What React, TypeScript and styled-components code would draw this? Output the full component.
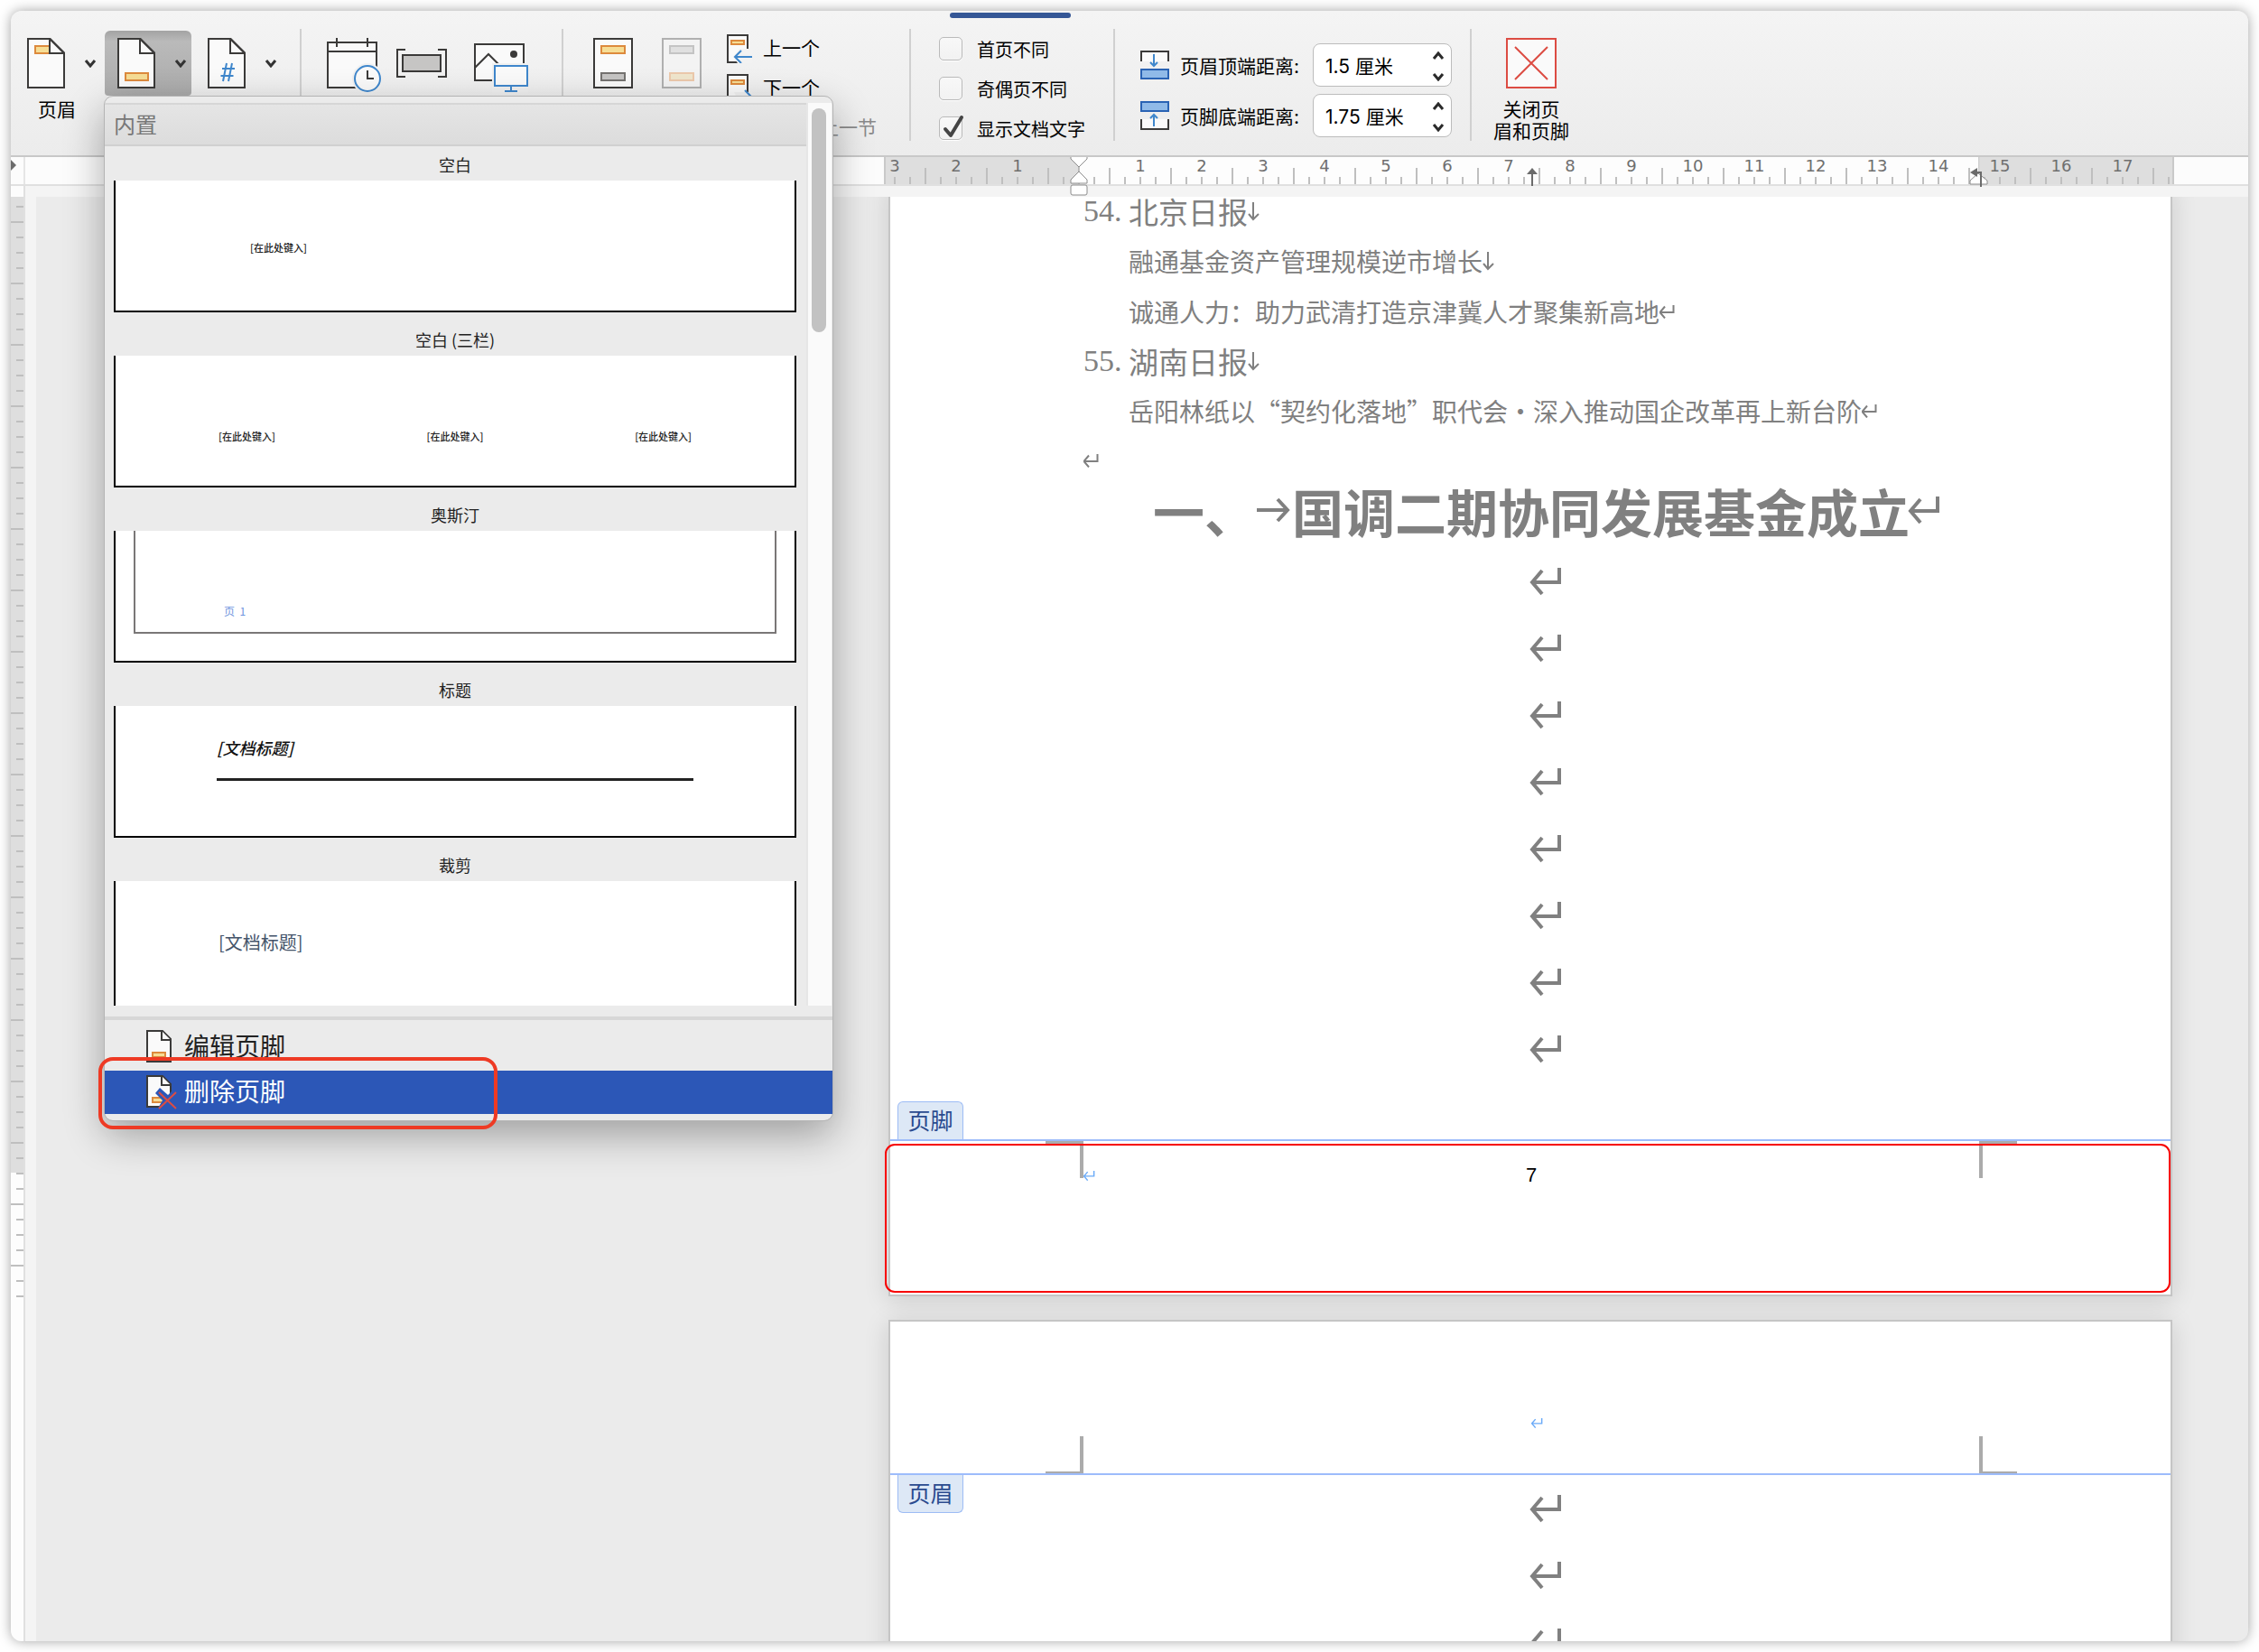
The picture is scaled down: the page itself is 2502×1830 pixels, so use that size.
import React from "react";
import styled, { createGlobalStyle, css } from "styled-components";

const UI_FONT = `Inter, "Noto Sans CJK SC", "Noto Sans", sans-serif`;
const CJK_FONT = `"Noto Sans CJK SC", "Noto Sans", sans-serif`;
const INK = "#3b3a39";
const BLUE = "#3f87cc";
const PAGE_INK = "#808080";

const GlobalStyle = createGlobalStyle`
  *, *::before, *::after { box-sizing: border-box; }
  html, body { margin: 0; height: 100%; }
  body { background: #fff; overflow: hidden; }
  #root { height: 100%; }
  button, input { font: inherit; color: inherit; }
  button { background: none; border: 0; padding: 0; cursor: pointer; }
  ul, ol, p, h1, h2 { margin: 0; padding: 0; list-style: none; }
  svg { display: block; flex: none; }
`;

/* ---------- window ---------- */

const Desktop = styled.div`
  height: 100%;
  padding: 12px;
  font-family: ${UI_FONT};
  color: #000;
`;

const Window = styled.main`
  position: relative;
  display: flex;
  flex-direction: column;
  height: 100%;
  border-radius: 12px;
  background: #ebebeb;
  box-shadow: 0 0 14px rgba(0, 0, 0, 0.36);
`;

/* ---------- ribbon ---------- */

const Ribbon = styled.header`
  position: relative;
  display: flex;
  align-items: flex-start;
  padding: 20px 0 8px;
  border-bottom: 2px solid #c8c8c8;
  border-radius: 12px 12px 0 0;
  background: linear-gradient(#f4f4f4, #ececec);
`;

const ActiveTab = styled.span`
  position: absolute;
  top: 2px;
  left: 1040px;
  width: 134px;
  height: 6px;
  border-radius: 3px;
  background: #355796;
`;

const Group = styled.div<{ $pad: string }>`
  display: flex;
  align-items: flex-start;
  padding: ${(p) => p.$pad};
  height: 132px;
`;

const Separator = styled.span`
  flex: none;
  width: 2px;
  height: 124px;
  background: #d0d0d0;
`;

const SplitColumn = styled.div`
  width: 100px;
  padding-top: 2px;
`;

const SplitButton = styled.button<{ $active?: boolean }>`
  display: flex;
  align-items: center;
  justify-content: space-between;
  width: 96px;
  height: 72px;
  padding: 0 5px 0 14px;
  border-radius: 6px 6px 4px 4px;
  ${(p) => p.$active && css`background: linear-gradient(#a3a3a3, #bababa 12px, #ababab);`}
`;

const ButtonLabel = styled.span`
  display: block;
  width: 94px;
  margin-top: 4px;
  font-size: 21px;
  line-height: 24px;
  text-align: center;
`;

const IconButton = styled.button<{ $width: number }>`
  display: flex;
  justify-content: center;
  width: ${(p) => p.$width}px;
  padding-top: 10px;
`;

const Stack = styled.div`
  display: flex;
  flex-direction: column;
`;

const SectionStack = styled(Stack)`
  padding-left: 12px;
`;

const SmallButton = styled.button`
  display: flex;
  align-items: center;
  gap: 12px;
  height: 44px;
  font-size: 21px;
  line-height: 24px;
  white-space: nowrap;
  &:disabled { color: #8a8a8a; }
`;

const CheckRow = styled.label`
  display: flex;
  align-items: center;
  gap: 16px;
  height: 44px;
  font-size: 20px;
  white-space: nowrap;
`;

const CheckBox = styled.span`
  display: grid;
  width: 26px;
  height: 26px;
  & > * { grid-area: 1 / 1; }
  svg { display: none; pointer-events: none; overflow: visible; }
  input:checked + svg { display: block; }
`;

const CheckInput = styled.input`
  appearance: none;
  width: 26px;
  height: 26px;
  margin: 0;
  border: 1px solid #bababa;
  border-radius: 5px;
  background: linear-gradient(#f8f8f8, #f2f2f2);
  box-shadow: 0 1px 1px #fff;
`;

const MarginRow = styled.div`
  display: grid;
  grid-template-columns: 32px 135px 154px;
  column-gap: 12px;
  align-items: center;
  height: 48px;
  margin-bottom: 8px;
  font-size: 21px;
  white-space: nowrap;
`;

const Stepper = styled.div`
  display: flex;
  align-items: center;
  height: 48px;
  border: 1px solid #bcbcbc;
  border-radius: 8px;
  background: #fff;
`;

const StepperInput = styled.input`
  flex: 1;
  min-width: 0;
  padding: 0 0 0 13px;
  border: 0;
  outline: 0;
  background: none;
`;

const StepperButtons = styled.div`
  display: flex;
  flex-direction: column;
  justify-content: space-between;
  height: 46px;
  padding: 6px 7px 3px 0;
`;

const StepButton = styled.button`
  height: 14px;
`;

const CloseButton = styled.button`
  display: flex;
  flex-direction: column;
  align-items: center;
  width: 132px;
  padding-top: 10px;
  font-size: 21px;
  line-height: 24px;
`;

const CloseLabel = styled.span`
  display: block;
  margin-top: 12px;
`;

/* ---------- rulers ---------- */

const RulerBar = styled.div`
  display: flex;
  height: 32px;
  border-bottom: 2px solid #e0e0e0;
  background: #fcfcfc;
`;

const RulerCorner = styled.div`
  width: 16px;
  border-right: 2px solid #e6e6e6;
`;

const RulerTrack = styled.div`
  position: relative;
  width: 1429px;
  margin: 0 82px 0 auto;
`;

const RulerScale = styled.div`
  display: grid;
  height: 30px;
  overflow: hidden;
  border-left: 2px solid #c9c9c9;
  border-right: 2px solid #c9c9c9;
  background: linear-gradient(to right, #dedede 214px, #fdfdfd 214px, #fdfdfd 1210px, #c9c9c9 1210px, #dedede 1212px);
  & > * { grid-area: 1 / 1; }
`;

const RulerNumbers = styled.div`
  display: flex;
  margin-left: -24px;
`;

const RulerNumber = styled.span`
  flex: none;
  width: 68px;
  font: 18px/20px "DejaVu Sans", sans-serif;
  color: #6f6f6f;
  text-align: center;
`;

const TickRow = styled.div`
  display: flex;
  align-items: flex-end;
  padding-left: 9px;
`;

const Tick = styled.span<{ $long: boolean }>`
  flex: none;
  width: 17px;
  height: ${(p) => (p.$long ? 18 : 8)}px;
  border-left: 2px solid #bfbfbf;
`;

const RulerMarker = styled.span<{ $left: number; $top: number }>`
  position: absolute;
  z-index: 1;
  left: ${(p) => p.$left}px;
  top: ${(p) => p.$top}px;
`;

const Workspace = styled.div`
  display: flex;
  flex: 1;
  min-height: 0;
  overflow: hidden;
  border-radius: 0 0 12px 12px;
`;

const VerticalRuler = styled.div`
  display: flex;
  flex: none;
  flex-direction: column;
  align-items: flex-end;
  gap: 15px;
  width: 16px;
  padding-top: 22px;
  border-right: 2px solid #e0e0e0;
  background: linear-gradient(#fcfcfc 12px, #dedede 12px, #dedede 1093px, #fdfdfd 1093px);
`;

const VerticalTick = styled.span<{ $long: boolean }>`
  flex: none;
  width: ${(p) => (p.$long ? 14 : 8)}px;
  height: 2px;
  background: #bfbfbf;
`;

/* ---------- document ---------- */

const Canvas = styled.div`
  display: flex;
  flex: 1;
  flex-direction: column;
  align-items: flex-end;
  min-width: 0;
  padding-right: 84px;
  overflow: hidden;
  border-top: 12px solid #f4f4f4;
  border-left: 12px solid #f4f4f4;
`;

const Pages = styled.div`
  display: flex;
  flex: none;
  flex-direction: column;
  gap: 26px;
  width: 1422px;
  margin-top: -13px;
`;

const Page = styled.article`
  border: 2px solid #c5c5c5;
  background: #fff;
  box-shadow: 0 4px 26px rgba(0, 0, 0, 0.14);
`;

const PageBody = styled.section`
  padding: 0 212px 0 214px;
  font-family: ${CJK_FONT};
  color: ${PAGE_INK};
`;

const Entry = styled.li`
  display: grid;
  grid-template-columns: 50px 1fr;
`;

const EntryNumber = styled.span`
  font: 34px/54px "Liberation Serif", serif;
`;

const EntryHead = styled.h2`
  display: flex;
  align-items: center;
  font-size: 33px;
  font-weight: 400;
  line-height: 54px;
`;

const EntryLine = styled.p`
  display: flex;
  grid-column: 2;
  align-items: center;
  font-size: 28px;
  line-height: 56px;
  white-space: nowrap;
`;

const EmptyLine = styled.p`
  display: flex;
  align-items: center;
  height: 54px;
`;

const Title = styled.h1`
  display: flex;
  align-items: center;
  justify-content: center;
  margin-bottom: 14px;
  font-size: 57px;
  font-weight: 700;
  line-height: 56px;
  white-space: nowrap;
`;

const HangingMark = styled.span`
  width: 0;
  svg { overflow: visible; }
`;

const CenterLine = styled.p`
  display: flex;
  align-items: center;
  justify-content: center;
  height: 74px;
`;

const RegionTab = styled.span<{ $below?: boolean }>`
  display: block;
  width: 73px;
  height: 42px;
  margin: 21px 0 0 8px;
  border: 1px solid #9dbcf5;
  border-bottom: 0;
  border-radius: 6px 6px 0 0;
  background: #dde8f6;
  color: #2b4b8f;
  font-family: ${CJK_FONT};
  font-size: 25px;
  font-weight: 400;
  line-height: 38px;
  text-align: center;
  ${(p) =>
    p.$below &&
    css`
      position: absolute;
      top: 0;
      left: 0;
      margin-top: 0;
      border: 1px solid #9dbcf5;
      border-top: 0;
      border-radius: 0 0 6px 6px;
    `}
`;

const PageFooter = styled.footer`
  position: relative;
  height: 172px;
  padding: 26px 212px 0 214px;
  border-top: 2px solid #9dbcfb;
`;

const PageHeader = styled.header`
  position: relative;
  height: 170px;
  padding: 100px 212px 0 214px;
  border-bottom: 2px solid #9dbcfb;
`;

const BelowHeader = styled.div`
  position: relative;
`;

const FooterLine = styled.p`
  display: grid;
  grid-template-columns: 1fr auto 1fr;
  align-items: center;
  height: 24px;
  font: 22px/24px "Liberation Sans", sans-serif;
`;

const HeaderLine = styled.p`
  display: flex;
  align-items: center;
  justify-content: center;
  height: 24px;
`;

const CropMark = styled.span<{ $side: "left" | "right"; $edge: "top" | "bottom" }>`
  position: absolute;
  width: 42px;
  height: 41px;
  border: 0 solid #ababab;
  ${(p) => (p.$side === "left" ? "left: 172px; border-right-width: 4px;" : "right: 170px; border-left-width: 4px;")}
  ${(p) => (p.$edge === "top" ? "top: 0; border-top-width: 3px;" : "bottom: 0; border-bottom-width: 2px;")}
`;

const FooterHighlight = styled.span`
  position: absolute;
  inset: 3px 0 2px -6px;
  border: 2px solid #f70000;
  border-radius: 11px;
`;

/* ---------- footer gallery menu ---------- */

const Menu = styled.div`
  position: absolute;
  z-index: 2;
  top: 94px;
  left: 103px;
  width: 808px;
  padding: 7px 0;
  border: 1px solid #b4b4b4;
  border-radius: 10px;
  background: #ebebeb;
  background-clip: padding-box;
  box-shadow: 0 16px 44px rgba(0, 0, 0, 0.32);
`;

const GalleryArea = styled.div`
  display: flex;
  height: 1000px;
  overflow: hidden;
`;

const Gallery = styled.div`
  flex: 1;
`;

const GalleryHeading = styled.h2`
  padding: 2px 0 0 10px;
  border-top: 2px solid #d6d6d6;
  border-bottom: 2px solid #d0d0d0;
  background: linear-gradient(#e5e5e5, #dcdcdc);
  color: #777;
  font-size: 24px;
  font-weight: 400;
  line-height: 42px;
`;

const GalleryItem = styled.button`
  display: block;
  width: 100%;
  padding: 4px 11px 10px 10px;
  text-align: left;
`;

const GalleryLabel = styled.span`
  display: block;
  padding-bottom: 2px;
  color: #222;
  font-family: ${CJK_FONT};
  font-size: 18px;
  line-height: 32px;
  text-align: center;
`;

const Preview = styled.span<{ $pad: string }>`
  display: block;
  height: 146px;
  padding: ${(p) => p.$pad};
  border: 2px solid #000;
  border-top: 0;
  background: #fff;
  font-family: ${CJK_FONT};
`;

const Placeholder = styled.span`
  display: block;
  font-size: 11px;
  line-height: 20px;
  font-weight: 500;
  color: #222;
`;

const Columns = styled.span`
  display: flex;
  justify-content: space-between;
`;

const InnerFrame = styled.span`
  display: block;
  height: 114px;
  padding: 79px 0 0 98px;
  border: 2px solid #7a7777;
  border-top: 0;
  color: #6f94de;
  font-size: 12px;
  line-height: 20px;
  white-space: pre;
`;

const ItalicTitle = styled.span`
  display: block;
  padding-bottom: 22px;
  border-bottom: 3px solid #222;
  color: #111;
  font-size: 18px;
  font-style: italic;
  font-weight: 500;
  line-height: 24px;
`;

const SlateTitle = styled.span`
  display: block;
  color: #44546a;
  font-size: 20px;
  line-height: 28px;
`;

const ScrollTrack = styled.div`
  width: 28px;
  margin-right: 1px;
  padding: 6px 0 0 4px;
  border-left: 2px solid #e6e6e6;
  background: #fafafa;
`;

const ScrollThumb = styled.div`
  width: 16px;
  height: 248px;
  border-radius: 8px;
  background: #c2c2c2;
`;

const MenuItems = styled.div`
  display: flex;
  flex-direction: column;
  gap: 2px;
  margin-top: 12px;
  padding-top: 6px;
  border-top: 4px solid #d7d7d7;
`;

const MenuItem = styled.button<{ $active?: boolean }>`
  display: flex;
  align-items: center;
  gap: 8px;
  height: 48px;
  padding-left: 46px;
  font-size: 28px;
  line-height: 46px;
  color: ${(p) => (p.$active ? "#fff" : "#222")};
  background: ${(p) => (p.$active ? "#2c57b7" : "transparent")};
`;

const MenuHighlight = styled.span`
  position: absolute;
  z-index: 3;
  top: 1159px;
  left: 97px;
  width: 442px;
  height: 80px;
  border: 4px solid #ee3a24;
  border-radius: 16px;
  pointer-events: none;
`;

/* ---------- icons ---------- */

const PageIcon = ({ kind }: { kind: "header" | "footer" | "number" }) => (
  <svg width="42" height="56" viewBox="0 0 42 56" fill="none">
    <path d="M1 1H25.500L41 16.500V55H1Z" fill="#fafafa" stroke={INK} strokeWidth="2" />
    {kind === "header" && <path d="M9 9H26V17H9Z" fill="#f6dd95" stroke="#dd8a3d" strokeWidth="2" />}
    {kind === "footer" && <path d="M9 39H34V47H9Z" fill="#f6dd95" stroke="#dd8a3d" strokeWidth="2" />}
    {kind === "number" && <path d="M21 28L17 48M27 28L23 48M16 34H30M14.500 42H28.500" stroke={BLUE} strokeWidth="2" />}
    <path d="M25 1V17H41Z" fill="#fafafa" stroke={INK} strokeWidth="2" />
  </svg>
);

const ChevronDown = () => (
  <svg width="14" height="10" viewBox="0 0 14 10" fill="none">
    <path d="M2 2L7 8L12 2" stroke="#333" strokeWidth="3" />
  </svg>
);

const StepChevron = ({ up }: { up?: boolean }) => (
  <svg width="14" height="10" viewBox="0 0 14 10" fill="none">
    <path d={up ? "M2 8L7 2L12 8" : "M2 2L7 8L12 2"} stroke="#2b2b2b" strokeWidth="3" />
  </svg>
);

const CalendarIcon = () => (
  <svg width="60" height="62" viewBox="0 0 60 62" fill="none">
    <path d="M1 5H55V55H1Z" fill="#fafafa" stroke={INK} strokeWidth="2" />
    <path d="M1 15H55M11 0V10M45 0V10" stroke={INK} strokeWidth="2" />
    <circle cx="45" cy="45" r="17" fill="#f1f1f1" />
    <circle cx="45" cy="45" r="14" fill="#fafafa" stroke={BLUE} strokeWidth="2" />
    <path d="M45 36V45H52" stroke={INK} strokeWidth="2" />
  </svg>
);

const FieldIcon = () => (
  <svg width="56" height="56" viewBox="0 0 56 56" fill="none">
    <path d="M10 13H1V43H10M46 13H55V43H46" stroke={INK} strokeWidth="2" />
    <path d="M7 19H49V37H7Z" fill="#c6c5c4" stroke={INK} strokeWidth="2" />
  </svg>
);

const PictureIcon = () => (
  <svg width="60" height="62" viewBox="0 0 60 62" fill="none">
    <path d="M1 7H55V47H1Z" fill="#fafafa" stroke={INK} strokeWidth="2" />
    <path d="M1 33L16 18L30 32" stroke={INK} strokeWidth="2" />
    <circle cx="44" cy="18" r="4" fill={INK} />
    <path d="M20 28H60V62H20Z" fill="#f1f1f1" />
    <path d="M23 31H59V53H23Z" fill="#fafafa" stroke={BLUE} strokeWidth="2" />
    <path d="M41 53V59M34 59H48" stroke={BLUE} strokeWidth="2" />
  </svg>
);

const GoToIcon = ({ target }: { target: "header" | "footer" }) => {
  const faded = target === "footer";
  return (
    <svg width="44" height="56" viewBox="0 0 44 56" fill="none">
      <path d="M1 1H43V55H1Z" fill={faded ? "#f3f3f3" : "#fafafa"} stroke={faded ? "#b0b0b0" : INK} strokeWidth="2" />
      <path d="M9 9H35V17H9Z" fill={faded ? "#e0e0e0" : "#f6dd95"} stroke={faded ? "#c4c4c4" : "#dd8a3d"} strokeWidth="2" />
      <path d="M9 39H35V47H9Z" fill={faded ? "#f0e6cd" : "#c6c5c4"} stroke={faded ? "#ecc9ac" : "#757371"} strokeWidth="2" />
    </svg>
  );
};

const SectionIcon = ({ next }: { next?: boolean }) => (
  <svg width="28" height="32" viewBox="0 0 28 32" fill="none">
    <path d="M1 1H23V31H1Z" fill="#fafafa" stroke={INK} strokeWidth="2" />
    <path d="M5 7H19V11H5Z" fill="#f6dd95" stroke="#dd8a3d" strokeWidth="2" />
    <path d={next ? "M8 20H28V32H14Z" : "M7 25L14 16H28V32H12Z"} fill="#f2f2f2" />
    <path d={next ? "M8 25H27M20 18L27 25L20 32" : "M28 25H9M16 18L9 25L16 32"} stroke={BLUE} strokeWidth="2" />
  </svg>
);

const LinkIcon = () => (
  <svg width="28" height="32" viewBox="0 0 28 32" fill="none">
    <path d="M1 1H23V31H1Z" fill="#f3f3f3" stroke="#b0b0b0" strokeWidth="2" />
  </svg>
);

const CheckMark = () => (
  <svg width="26" height="26" viewBox="0 0 26 26" fill="none">
    <path d="M7 14L13 21L25 1" stroke="#454545" strokeWidth="4" strokeLinecap="round" strokeLinejoin="round" />
  </svg>
);

const MarginIcon = ({ bottom }: { bottom?: boolean }) => (
  <svg width="32" height="32" viewBox="0 0 32 32" fill="none">
    {bottom ? (
      <>
        <path d="M1 1H31V11H1Z" fill="#90bae8" stroke="#2a63b4" strokeWidth="2" />
        <path d="M1 20V31H31V20" fill="#fafafa" stroke={INK} strokeWidth="2" />
        <path d="M15 28V15M11 19L15 15L19 19" stroke={BLUE} strokeWidth="2" />
      </>
    ) : (
      <>
        <path d="M1 12V1H31V12" fill="#fafafa" stroke={INK} strokeWidth="2" />
        <path d="M15 4V17M11 13L15 17L19 13" stroke={BLUE} strokeWidth="2" />
        <path d="M1 21H31V31H1Z" fill="#90bae8" stroke="#2a63b4" strokeWidth="2" />
      </>
    )}
  </svg>
);

const CloseIcon = () => (
  <svg width="56" height="56" viewBox="0 0 56 56" fill="none">
    <path d="M1 1H55V55H1Z" fill="#fafafa" stroke="#dc4c43" strokeWidth="2" />
    <path d="M10 10L46 46M46 10L10 46" stroke="#dc4c43" strokeWidth="2" />
  </svg>
);

const MenuPageIcon = ({ remove }: { remove?: boolean }) => (
  <svg width="34" height="38" viewBox="0 0 34 38" fill="none">
    <path d="M1 1H18L27 10V35H1Z" fill="#fafafa" stroke={INK} strokeWidth="2" />
    <path d="M17 1V11H27" fill="#fafafa" stroke={INK} strokeWidth="2" />
    <path d="M7 25H21V30H7Z" fill="#f6dd95" stroke="#dd8a3d" strokeWidth="2" />
    {remove && (
      <>
        <path d="M10 20L15 14L24 22L30 16L34 20V38H12L18 28Z" fill="#2c57b7" />
        <path d="M14 19L33 37M33 19L14 37" stroke="#dc4c43" strokeWidth="2" />
      </>
    )}
  </svg>
);

const ReturnMark = ({ size, color = PAGE_INK }: { size: "small" | "medium" | "large"; color?: string }) => {
  const width = { small: 13, medium: 17, large: 34 }[size];
  const height = { small: 11, medium: 15, large: 30 }[size];
  return (
    <svg width={width} height={height} viewBox="0 0 34 30" fill="none">
      <path d="M31 0V16H1M12 3L1 16L12 29" stroke={color} strokeWidth="4" />
    </svg>
  );
};

const LineBreakMark = () => (
  <svg width="13" height="22" viewBox="0 0 13 22" fill="none">
    <path d="M6 1V20M1 14L6 20L12 14" stroke={PAGE_INK} strokeWidth="2" />
  </svg>
);

const TabMark = () => (
  <svg width="40" height="28" viewBox="0 0 40 28" fill="none">
    <path d="M1 14H35M24 2L35 14L24 26" stroke={PAGE_INK} strokeWidth="4" />
  </svg>
);

const IndentMarker = () => (
  <svg width="20" height="43" viewBox="0 0 20 43" fill="#fff" stroke="#8c8c8c">
    <path d="M1 0V2L10 11L19 2V0" />
    <path d="M10 11V17" />
    <path d="M10 16L19 25V29H1V25Z" />
    <rect x="1" y="31" width="18" height="11" rx="2" />
  </svg>
);

const CenterTabStop = () => (
  <svg width="12" height="20" viewBox="0 0 12 20" fill="none">
    <path d="M6 0L12 7H0Z" fill="#6b6b6b" />
    <path d="M6 6V20" stroke="#6b6b6b" strokeWidth="2" />
  </svg>
);

const RightIndentMarker = () => (
  <svg width="22" height="22" viewBox="0 0 22 22" fill="none">
    <path d="M10 6L20 14V18H1V14Z" fill="#fff" stroke="#8c8c8c" />
    <path d="M1 5L9 0V10Z" fill="#6b6b6b" />
    <path d="M8 5H13V21" stroke="#6b6b6b" strokeWidth="2" />
  </svg>
);

const CornerArrow = () => (
  <svg width="8" height="18" viewBox="0 0 8 18">
    <path d="M0 3L6 9L0 15Z" fill="#6b6b6b" />
  </svg>
);

/* ---------- data ---------- */

const rulerNumbers = ["3", "2", "1", "", ...Array.from({ length: 17 }, (_, i) => String(i + 1))];
const horizontalTicks = Array.from({ length: 84 }, (_, i) => i % 4 === 2);
const verticalTicks = Array.from({ length: 72 }, (_, i) => i % 4 === 1);

const entries = [
  {
    number: "54.",
    name: "北京日报",
    lines: [
      { text: "融通基金资产管理规模逆市增长", last: false },
      { text: "诚通人力：助力武清打造京津冀人才聚集新高地", last: true },
    ],
  },
  {
    number: "55.",
    name: "湖南日报",
    lines: [{ text: "岳阳林纸以“契约化落地”职代会·深入推动国企改革再上新台阶", last: true }],
  },
];

const options = [
  { id: "first-page", label: "首页不同", checked: false },
  { id: "odd-even", label: "奇偶页不同", checked: false },
  { id: "show-text", label: "显示文档文字", checked: true },
];

/* ---------- sections ---------- */

function MarginField({ id, label, value, bottom }: { id: string; label: string; value: string; bottom?: boolean }) {
  return (
    <MarginRow>
      <MarginIcon bottom={bottom} />
      <label htmlFor={id}>{label}</label>
      <Stepper>
        <StepperInput id={id} type="text" defaultValue={value} />
        <StepperButtons>
          <StepButton type="button" aria-label="增加"><StepChevron up /></StepButton>
          <StepButton type="button" aria-label="减少"><StepChevron /></StepButton>
        </StepperButtons>
      </Stepper>
    </MarginRow>
  );
}

function RibbonBar() {
  return (
    <Ribbon>
      <ActiveTab />
      <Group $pad="0 16px 0 4px">
        <SplitColumn>
          <SplitButton type="button" aria-labelledby="header-label"><PageIcon kind="header" /><ChevronDown /></SplitButton>
          <ButtonLabel id="header-label">页眉</ButtonLabel>
        </SplitColumn>
        <SplitColumn>
          <SplitButton type="button" aria-label="页脚" $active><PageIcon kind="footer" /><ChevronDown /></SplitButton>
        </SplitColumn>
        <SplitColumn>
          <SplitButton type="button" aria-label="页码"><PageIcon kind="number" /><ChevronDown /></SplitButton>
        </SplitColumn>
      </Group>
      <Separator />
      <Group $pad="0 16px 0 20px">
        <IconButton type="button" aria-label="日期和时间" $width={76}><CalendarIcon /></IconButton>
        <IconButton type="button" aria-label="域" $width={74}><FieldIcon /></IconButton>
        <IconButton type="button" aria-label="图片" $width={102}><PictureIcon /></IconButton>
      </Group>
      <Separator />
      <Group $pad="0 36px 0 17px">
        <IconButton type="button" aria-label="转至页眉" $width={76}><GoToIcon target="header" /></IconButton>
        <IconButton type="button" aria-label="转至页脚" disabled $width={76}><GoToIcon target="footer" /></IconButton>
        <SectionStack>
          <SmallButton type="button"><SectionIcon />上一个</SmallButton>
          <SmallButton type="button"><SectionIcon next />下一个</SmallButton>
          <SmallButton type="button" disabled><LinkIcon />链接到上一节</SmallButton>
        </SectionStack>
      </Group>
      <Separator />
      <Group $pad="0 31px">
        <Stack>
          {options.map((o) => (
            <CheckRow key={o.id} htmlFor={o.id}>
              <CheckBox>
                <CheckInput id={o.id} type="checkbox" defaultChecked={o.checked} />
                <CheckMark />
              </CheckBox>
              {o.label}
            </CheckRow>
          ))}
        </Stack>
      </Group>
      <Separator />
      <Group $pad="16px 20px 0 28px">
        <Stack>
          <MarginField id="header-top" label="页眉顶端距离:" value="1.5 厘米" />
          <MarginField id="footer-bottom" label="页脚底端距离:" value="1.75 厘米" bottom />
        </Stack>
      </Group>
      <Separator />
      <CloseButton type="button">
        <CloseIcon />
        <CloseLabel>关闭页<br />眉和页脚</CloseLabel>
      </CloseButton>
    </Ribbon>
  );
}

function HorizontalRuler() {
  return (
    <RulerBar>
      <RulerCorner><CornerArrow /></RulerCorner>
      <RulerTrack>
        <RulerScale>
          <RulerNumbers>
            {rulerNumbers.map((n, i) => <RulerNumber key={i}>{n}</RulerNumber>)}
          </RulerNumbers>
          <TickRow>
            {horizontalTicks.map((long, i) => <Tick key={i} $long={long} />)}
          </TickRow>
        </RulerScale>
        <RulerMarker $left={206} $top={0}><IndentMarker /></RulerMarker>
        <RulerMarker $left={712} $top={12}><CenterTabStop /></RulerMarker>
        <RulerMarker $left={1202} $top={12}><RightIndentMarker /></RulerMarker>
      </RulerTrack>
    </RulerBar>
  );
}

function DocumentPages() {
  return (
    <Pages>
      <Page>
        <PageBody>
          <ol>
            {entries.map((e) => (
              <Entry key={e.number}>
                <EntryNumber>{e.number}</EntryNumber>
                <EntryHead>{e.name}<LineBreakMark /></EntryHead>
                {e.lines.map((l) => (
                  <EntryLine key={l.text}>
                    {l.text}
                    {l.last ? <ReturnMark size="medium" /> : <LineBreakMark />}
                  </EntryLine>
                ))}
              </Entry>
            ))}
          </ol>
          <EmptyLine><ReturnMark size="medium" /></EmptyLine>
          <Title>
            一、<TabMark />国调二期协同发展基金成立
            <HangingMark><ReturnMark size="large" /></HangingMark>
          </Title>
          {Array.from({ length: 8 }, (_, i) => (
            <CenterLine key={i}><HangingMark><ReturnMark size="large" /></HangingMark></CenterLine>
          ))}
        </PageBody>
        <RegionTab>页脚</RegionTab>
        <PageFooter>
          <CropMark $side="left" $edge="top" />
          <CropMark $side="right" $edge="top" />
          <FooterLine><ReturnMark size="small" color="#6aaaf8" /><span>7</span></FooterLine>
          <FooterHighlight />
        </PageFooter>
      </Page>
      <Page>
        <PageHeader>
          <CropMark $side="left" $edge="bottom" />
          <CropMark $side="right" $edge="bottom" />
          <HeaderLine><HangingMark><ReturnMark size="small" color="#6aaaf8" /></HangingMark></HeaderLine>
        </PageHeader>
        <BelowHeader>
          <RegionTab $below>页眉</RegionTab>
          <PageBody>
            {Array.from({ length: 4 }, (_, i) => (
              <CenterLine key={i}><HangingMark><ReturnMark size="large" /></HangingMark></CenterLine>
            ))}
          </PageBody>
        </BelowHeader>
      </Page>
    </Pages>
  );
}

function FooterMenu() {
  return (
    <Menu>
      <GalleryArea>
        <Gallery>
          <GalleryHeading>内置</GalleryHeading>
          <GalleryItem type="button">
            <GalleryLabel>空白</GalleryLabel>
            <Preview $pad="64px 0 0 149px"><Placeholder>[在此处键入]</Placeholder></Preview>
          </GalleryItem>
          <GalleryItem type="button">
            <GalleryLabel>空白 (三栏)</GalleryLabel>
            <Preview $pad="79px 114px 0">
              <Columns>
                <Placeholder>[在此处键入]</Placeholder>
                <Placeholder>[在此处键入]</Placeholder>
                <Placeholder>[在此处键入]</Placeholder>
              </Columns>
            </Preview>
          </GalleryItem>
          <GalleryItem type="button">
            <GalleryLabel>奥斯汀</GalleryLabel>
            <Preview $pad="0 20px"><InnerFrame>{"页  1"}</InnerFrame></Preview>
          </GalleryItem>
          <GalleryItem type="button">
            <GalleryLabel>标题</GalleryLabel>
            <Preview $pad="34px 112px 0"><ItalicTitle>[文档标题]</ItalicTitle></Preview>
          </GalleryItem>
          <GalleryItem type="button">
            <GalleryLabel>裁剪</GalleryLabel>
            <Preview $pad="54px 0 0 114px"><SlateTitle>[文档标题]</SlateTitle></Preview>
          </GalleryItem>
        </Gallery>
        <ScrollTrack><ScrollThumb /></ScrollTrack>
      </GalleryArea>
      <MenuItems>
        <MenuItem type="button"><MenuPageIcon />编辑页脚</MenuItem>
        <MenuItem type="button" $active><MenuPageIcon remove />删除页脚</MenuItem>
      </MenuItems>
    </Menu>
  );
}

export default function App() {
  return (
    <>
      <GlobalStyle />
      <Desktop>
        <Window>
          <RibbonBar />
          <HorizontalRuler />
          <Workspace>
            <VerticalRuler>
              {verticalTicks.map((long, i) => <VerticalTick key={i} $long={long} />)}
            </VerticalRuler>
            <Canvas><DocumentPages /></Canvas>
          </Workspace>
          <FooterMenu />
          <MenuHighlight />
        </Window>
      </Desktop>
    </>
  );
}
